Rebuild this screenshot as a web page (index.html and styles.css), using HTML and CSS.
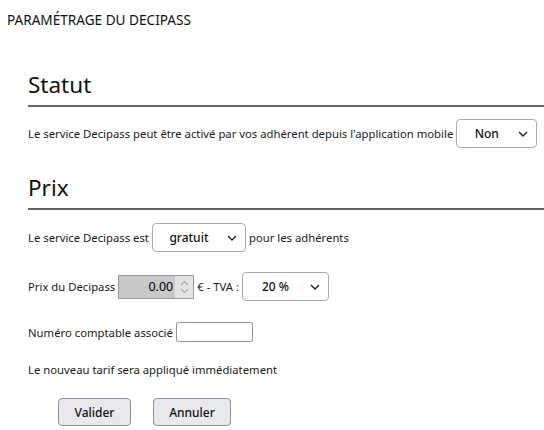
FILE: index.html
```html
<!DOCTYPE html>
<html lang="fr">
<head>
<meta charset="utf-8">
<title>Paramétrage du Decipass</title>
<link rel="stylesheet" href="styles.css">
</head>
<body>
<div class="page-title">PARAMÉTRAGE DU DECIPASS</div>
<div class="content">
  <h2 class="section-title">Statut</h2>
  <div class="row row-statut">
    <span>Le service Decipass peut être activé par vos adhérent depuis l'application mobile</span>
    <span class="select-wrap sel-non">
      <select><option>Non</option><option>Oui</option></select>
      <svg class="chev" width="10" height="6" viewBox="0 0 10 6"><path d="M1 1l4 4 4-4" fill="none" stroke="#222" stroke-width="1.4"/></svg>
    </span>
  </div>

  <h2 class="section-title prix">Prix</h2>
  <div class="row row-gratuit">
    <span>Le service Decipass est</span>
    <span class="select-wrap sel-gratuit">
      <select><option>gratuit</option><option>payant</option></select>
      <svg class="chev" width="10" height="6" viewBox="0 0 10 6"><path d="M1 1l4 4 4-4" fill="none" stroke="#222" stroke-width="1.4"/></svg>
    </span>
    <span>pour les adhérents</span>
  </div>

  <div class="row row-prix">
    <span>Prix du Decipass</span>
    <span class="number-field">
      <input type="text" value="0.00" disabled>
      <span class="spin">
        <svg width="9" height="14" viewBox="0 0 9 14"><path d="M1 5l3.5-3.5L8 5M1 9l3.5 3.5L8 9" fill="none" stroke="#a5a5a5" stroke-width="1.2"/></svg>
      </span>
    </span>
    <span>€ - TVA :</span>
    <span class="select-wrap sel-tva">
      <select><option>20 %</option><option>10 %</option><option>5.5 %</option></select>
      <svg class="chev" width="10" height="6" viewBox="0 0 10 6"><path d="M1 1l4 4 4-4" fill="none" stroke="#222" stroke-width="1.4"/></svg>
    </span>
  </div>

  <div class="row row-compte">
    <span>Numéro comptable associé</span>
    <input class="text-field" type="text">
  </div>

  <div class="row row-note">Le nouveau tarif sera appliqué immédiatement</div>

  <div class="buttons">
    <button class="btn btn-valider">Valider</button>
    <button class="btn btn-annuler">Annuler</button>
  </div>
</div>
</body>
</html>
```

FILE: styles.css
```css
* { box-sizing: border-box; }
html, body { margin: 0; padding: 0; background: #fff; }
body {
  font-family: "Noto Sans", "Open Sans", sans-serif;
  font-size: 11.3px;
  color: #1a1a1a;
}
.page-title {
  padding: 12px 0 0 7px;
  font-size: 13.6px;
  line-height: 16px;
  color: #111;
}
.content {
  padding-left: 28px;
}
.section-title {
  margin: 0;
  font-weight: 400;
  font-size: 22.5px;
  line-height: 28px;
  color: #111;
  border-bottom: 2px solid #666;
  padding-bottom: 6px;
}
.section-title:first-child { margin-top: 43px; }
.section-title.prix { margin-top: 26px; }
.row {
  display: flex;
  align-items: center;
  gap: 3px;
  white-space: nowrap;
}
.row-statut { margin-top: 12px; }
.row-gratuit { margin-top: 13px; }
.row-prix { margin-top: 20px; }
.row-compte { margin-top: 21px; }
.row-note { margin-top: 20px; }

.select-wrap {
  position: relative;
  display: inline-flex;
}
.select-wrap select {
  appearance: none;
  -webkit-appearance: none;
  font: inherit;
  font-size: 12px;
  font-weight: 500;
  color: #111;
  background: #fff;
  border: 1px solid #a9a9a9;
  border-radius: 4px;
  height: 29px;
  padding: 0 20px 0 0;
  text-align: center;
  text-align-last: center;
}
.select-wrap .chev {
  position: absolute;
  right: 9px;
  top: 12px;
  pointer-events: none;
}
.sel-non select { width: 81px; }
.sel-gratuit select { width: 94px; }
.sel-tva select { width: 87px; }

.number-field {
  display: inline-flex;
  width: 76px;
  height: 24px;
  border: 1px solid #9a9a9a;
  background: #c8c8c8;
}
.number-field input {
  flex: 1;
  min-width: 0;
  border: 0;
  background: transparent;
  font: inherit;
  font-size: 12.5px;
  color: #000;
  -webkit-text-fill-color: #000;
  text-align: right;
  padding: 0 2px 0 0;
}
.number-field .spin {
  width: 18px;
  background: #e4e4e6;
  display: flex;
  align-items: center;
  justify-content: center;
}

.text-field {
  width: 77px;
  height: 20px;
  border: 1px solid #8f8f9d;
  border-radius: 2px;
  font: inherit;
  padding: 0 3px;
}

.buttons {
  display: flex;
  gap: 22px;
  margin-top: 21px;
  padding-left: 30px;
}
.btn {
  font: inherit;
  font-size: 12px;
  font-weight: 500;
  color: #111;
  height: 28px;
  background: #e9e9ed;
  border: 1px solid #8f8f9d;
  border-radius: 4px;
  padding: 0;
}
.btn-valider { width: 73px; }
.btn-annuler { width: 78px; }
```
